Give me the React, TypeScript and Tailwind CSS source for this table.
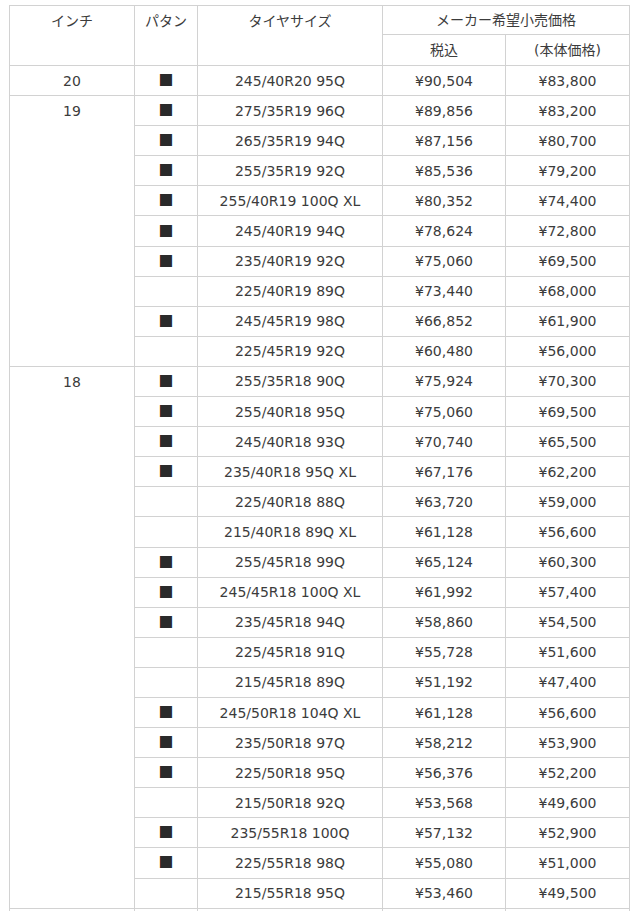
type Row = { p: boolean; size: string; tax: string; base: string };
type Group = { inch: string; rows: Row[] };

const r = (p: boolean, size: string, tax: string, base: string): Row => ({ p, size, tax, base });

const groups: Group[] = [
  { inch: '20', rows: [r(true, '245/40R20 95Q', '¥90,504', '¥83,800')] },
  {
    inch: '19',
    rows: [
      r(true, '275/35R19 96Q', '¥89,856', '¥83,200'),
      r(true, '265/35R19 94Q', '¥87,156', '¥80,700'),
      r(true, '255/35R19 92Q', '¥85,536', '¥79,200'),
      r(true, '255/40R19 100Q XL', '¥80,352', '¥74,400'),
      r(true, '245/40R19 94Q', '¥78,624', '¥72,800'),
      r(true, '235/40R19 92Q', '¥75,060', '¥69,500'),
      r(false, '225/40R19 89Q', '¥73,440', '¥68,000'),
      r(true, '245/45R19 98Q', '¥66,852', '¥61,900'),
      r(false, '225/45R19 92Q', '¥60,480', '¥56,000'),
    ],
  },
  {
    inch: '18',
    rows: [
      r(true, '255/35R18 90Q', '¥75,924', '¥70,300'),
      r(true, '255/40R18 95Q', '¥75,060', '¥69,500'),
      r(true, '245/40R18 93Q', '¥70,740', '¥65,500'),
      r(true, '235/40R18 95Q XL', '¥67,176', '¥62,200'),
      r(false, '225/40R18 88Q', '¥63,720', '¥59,000'),
      r(false, '215/40R18 89Q XL', '¥61,128', '¥56,600'),
      r(true, '255/45R18 99Q', '¥65,124', '¥60,300'),
      r(true, '245/45R18 100Q XL', '¥61,992', '¥57,400'),
      r(true, '235/45R18 94Q', '¥58,860', '¥54,500'),
      r(false, '225/45R18 91Q', '¥55,728', '¥51,600'),
      r(false, '215/45R18 89Q', '¥51,192', '¥47,400'),
      r(true, '245/50R18 104Q XL', '¥61,128', '¥56,600'),
      r(true, '235/50R18 97Q', '¥58,212', '¥53,900'),
      r(true, '225/50R18 95Q', '¥56,376', '¥52,200'),
      r(false, '215/50R18 92Q', '¥53,568', '¥49,600'),
      r(true, '235/55R18 100Q', '¥57,132', '¥52,900'),
      r(true, '225/55R18 98Q', '¥55,080', '¥51,000'),
      r(false, '215/55R18 95Q', '¥53,460', '¥49,500'),
    ],
  },
];

const cell = 'border border-[#d2d2d2] text-center align-middle p-0';

export default function App() {
  return (
    <div className="bg-white min-h-screen pt-[5px] pl-[9px] text-[14px] leading-[20px] text-[#3c3c3c] font-['DejaVu_Sans','Noto_Sans_CJK_JP',sans-serif]">
      <table className="table-fixed border-collapse w-[620px]">
        <colgroup>
          <col className="w-[125px]" />
          <col className="w-[63px]" />
          <col className="w-[185px]" />
          <col className="w-[123px]" />
          <col className="w-[124px]" />
        </colgroup>
        <thead>
          <tr className="h-[29px]">
            <th rowSpan={2} className={`${cell} align-top pt-[5px] font-normal`}>インチ</th>
            <th rowSpan={2} className={`${cell} align-top pt-[5px] font-normal`}>パタン</th>
            <th rowSpan={2} className={`${cell} align-top pt-[5px] font-normal`}>タイヤサイズ</th>
            <th colSpan={2} className={`${cell} font-normal`}>メーカー希望小売価格</th>
          </tr>
          <tr className="h-[31px]">
            <th className={`${cell} font-normal`}>税込</th>
            <th className={`${cell} font-normal`}>(本体価格)</th>
          </tr>
        </thead>
        <tbody>
          {groups.map((g) =>
            g.rows.map((row, i) => (
              <tr key={g.inch + row.size} className="h-[30.1px]">
                {i === 0 && (
                  <td rowSpan={g.rows.length} className={`${cell} align-top pt-[5px]`}>
                    {g.inch}
                  </td>
                )}
                <td className={cell}>
                  {row.p && (
                    <span className="text-[15px] text-[#2a2a2a] font-['Noto_Sans_CJK_JP',sans-serif]">■</span>
                  )}
                </td>
                <td className={cell}>{row.size}</td>
                <td className={cell}>{row.tax}</td>
                <td className={cell}>{row.base}</td>
              </tr>
            ))
          )}
          <tr className="h-[30px]">
            <td className={cell}></td>
            <td className={cell}></td>
            <td className={cell}></td>
            <td className={cell}></td>
            <td className={cell}></td>
          </tr>
        </tbody>
      </table>
    </div>
  );
}
